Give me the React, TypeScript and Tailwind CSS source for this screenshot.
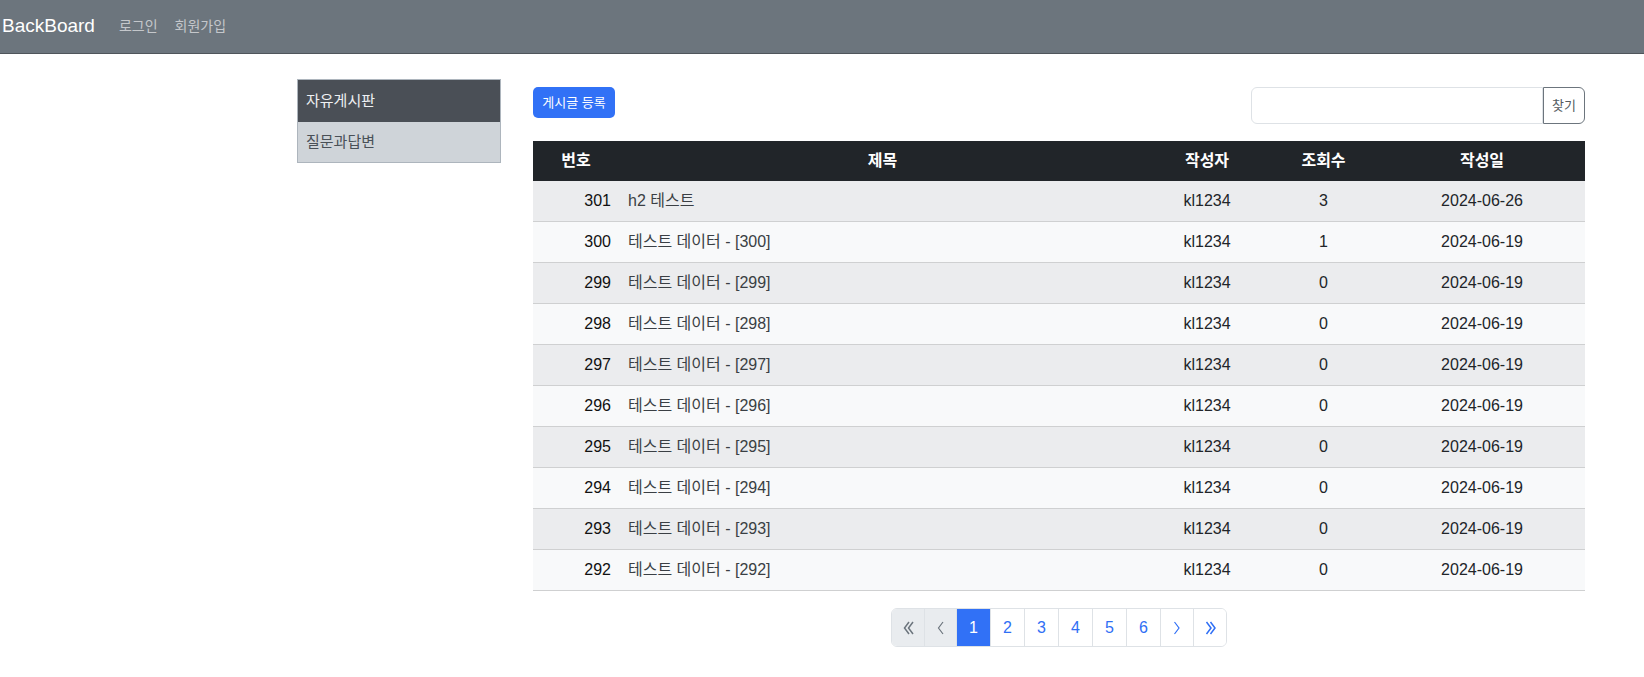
import React from "react";

const font = "font-['Liberation_Sans','Noto_Sans_CJK_KR',sans-serif]";

type Post = { id: number; title: string; writer: string; views: number; date: string };

const posts: Post[] = [
  { id: 301, title: "h2 테스트", writer: "kl1234", views: 3, date: "2024-06-26" },
  ...[300, 299, 298, 297, 296, 295, 294, 293, 292].map((n) => ({
    id: n,
    title: `테스트 데이터 - [${n}]`,
    writer: "kl1234",
    views: n === 300 ? 1 : 0,
    date: "2024-06-19",
  })),
];

function Chevron({ dir, double }: { dir: "left" | "right"; double?: boolean }) {
  const one = dir === "left" ? "M6 1 L1.5 7 L6 13" : "M1.5 1 L6 7 L1.5 13";
  const two = dir === "left" ? "M10 1 L5.5 7 L10 13" : "M5.5 1 L10 7 L5.5 13";
  return (
    <svg
      width={double ? 11 : 8}
      height="14"
      viewBox={double ? "0 0 11 14" : "0 0 8 14"}
      fill="none"
      stroke="currentColor"
      strokeWidth={double ? 1.5 : 1.2}
    >
      <path d={one} />
      {double && <path d={two} />}
    </svg>
  );
}

function Pagination() {
  const pages = [1, 2, 3, 4, 5, 6];
  const cell = "flex items-center justify-center h-[37px] border-l border-[#dee2e6] first:border-l-0";
  return (
    <div className="flex border border-[#dee2e6] rounded-md overflow-hidden">
      <span className={`${cell} w-[32px] bg-[#e9ecef] text-[#6c757d]`}>
        <Chevron dir="left" double />
      </span>
      <span className={`${cell} w-[32px] bg-[#e9ecef] text-[#6c757d]`}>
        <Chevron dir="left" />
      </span>
      {pages.map((p) => (
        <span
          key={p}
          className={`${cell} w-[34px] text-base ${
            p === 1 ? "bg-[#3171f6] text-white border-[#3171f6]" : "bg-white text-[#2f6ff5]"
          }`}
        >
          {p}
        </span>
      ))}
      <span className={`${cell} w-[33px] bg-white text-[#2f6ff5]`}>
        <Chevron dir="right" />
      </span>
      <span className={`${cell} w-[33px] bg-white text-[#2f6ff5]`}>
        <Chevron dir="right" double />
      </span>
    </div>
  );
}

export default function App() {
  return (
    <div className={`min-h-screen bg-white ${font} text-[#212529]`}>
      <nav className="h-[54px] bg-[#6c757d] border-b border-[#4f555b] flex items-center pl-[2px]">
        <span className="text-[19px] text-white mr-[24px]">BackBoard</span>
        <span className="text-[14px] text-[#c4c7cb] mr-[17px]">로그인</span>
        <span className="text-[14px] text-[#c4c7cb]">회원가입</span>
      </nav>

      <div className="flex pl-[297px] pt-[25px]">
        <div className="w-[204px] shrink-0 self-start border border-[#adb5bd]">
          <div className="h-[42px] bg-[#4a4f56] text-[#eef0f2] text-[15px] flex items-center pl-[8px]">
            자유게시판
          </div>
          <div className="h-[40px] bg-[#cfd4d9] text-[#495057] text-[15px] flex items-center pl-[8px]">
            질문과답변
          </div>
        </div>

        <div className="ml-[32px] w-[1052px] pt-[8px]">
          <div className="flex items-start justify-between h-[37px]">
            <button className="h-[31px] w-[82px] rounded-[5px] bg-[#3171f6] text-white text-[13px] flex items-center justify-center">
              게시글 등록
            </button>
            <div className="flex h-[37px] w-[334px]">
              <input className="flex-1 border border-[#dee2e6] rounded-l-md outline-none px-3" />
              <button className="w-[42px] border border-[#6c757d] rounded-r-md text-[13px] text-[#555b61] flex items-center justify-center">
                찾기
              </button>
            </div>
          </div>

          <div className="mt-[17px]">
            <div className="flex h-[40px] bg-[#212529] text-white font-bold text-base items-center">
              <div className="w-[86px] text-center">번호</div>
              <div className="w-[527px] text-center">제목</div>
              <div className="w-[122px] text-center">작성자</div>
              <div className="w-[111px] text-center">조회수</div>
              <div className="w-[206px] text-center">작성일</div>
            </div>
            {posts.map((p, i) => (
              <div
                key={p.id}
                className={`flex h-[41px] items-center border-b border-[#cfd0d1] text-base ${
                  i % 2 === 0 ? "bg-[#ebecee]" : "bg-[#f8f9fa]"
                }`}
              >
                <div className="w-[86px] text-right pr-[8px] text-[#111]">{p.id}</div>
                <div className="w-[527px] pl-[9px] text-[#3a3f44]">{p.title}</div>
                <div className="w-[122px] text-center">{p.writer}</div>
                <div className="w-[111px] text-center">{p.views}</div>
                <div className="w-[206px] text-center">{p.date}</div>
              </div>
            ))}
          </div>

          <div className="flex justify-center mt-[17px]">
            <Pagination />
          </div>
        </div>
      </div>
    </div>
  );
}
